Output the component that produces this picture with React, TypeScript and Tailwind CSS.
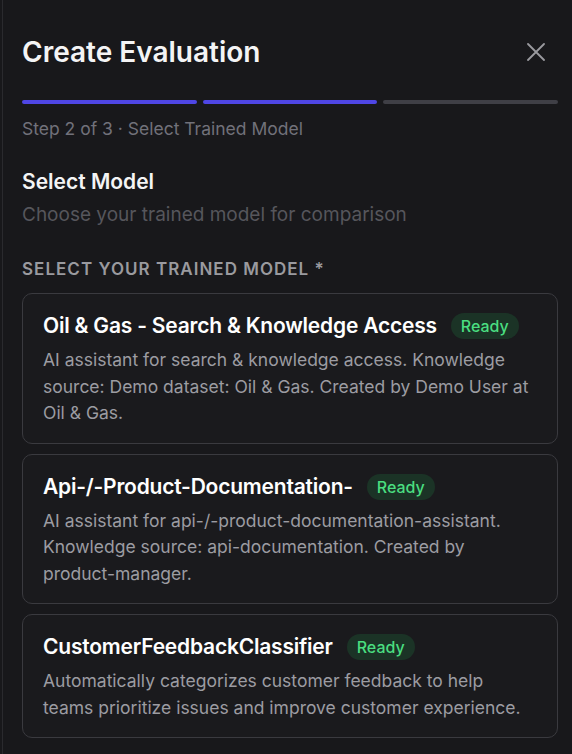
const models = [
  {
    name: "Oil & Gas - Search & Knowledge Access",
    lines: [
      "AI assistant for search & knowledge access. Knowledge",
      "source: Demo dataset: Oil & Gas. Created by Demo User at",
      "Oil & Gas.",
    ],
  },
  {
    name: "Api-/-Product-Documentation-",
    lines: [
      "AI assistant for api-/-product-documentation-assistant.",
      "Knowledge source: api-documentation. Created by",
      "product-manager.",
    ],
  },
  {
    name: "CustomerFeedbackClassifier",
    lines: [
      "Automatically categorizes customer feedback to help",
      "teams prioritize issues and improve customer experience.",
    ],
  },
];

function CloseIcon() {
  return (
    <svg className="block size-[18px]" viewBox="0 0 18 18" fill="none">
      <path d="M1 1L17 17M17 1L1 17" stroke="#9a9a9f" strokeWidth="1.8" strokeLinecap="round" />
    </svg>
  );
}

function ModelCard({ name, lines }: { name: string; lines: string[] }) {
  return (
    <div className="rounded-[10px] border border-[#3a3a3f] bg-[#1a1a1d] px-[20px] pt-[19px] pb-[16px]">
      <div className="flex items-center gap-[14px] h-[26px]">
        <p className="text-[21px] font-semibold leading-[26px] text-white tracking-[-0.01em] whitespace-nowrap">{name}</p>
        <span className="rounded-full bg-[#1b3326] px-[10px] h-[26px] flex items-center text-[16px] leading-[20px] font-medium text-[#4ade80]">
          Ready
        </span>
      </div>
      <p className="mt-[8px] text-[17.5px] leading-[26.5px] text-[#9c9ca2]">
        {lines.map((l) => (
          <span key={l} className="block whitespace-nowrap">
            {l}
          </span>
        ))}
      </p>
    </div>
  );
}

export default function App() {
  return (
    <div className="w-[572px] h-[754px] overflow-hidden bg-[#18181b] pl-[2px] font-['Inter',sans-serif]">
      <div className="h-full border-l border-[#2a2a2e] pl-[19px] pr-[14px] pt-[34px]">
        <div className="flex items-center justify-between h-[36px]">
          <h1 className="text-[28px] font-semibold leading-[36px] text-[#f4f4f5]">Create Evaluation</h1>
          <div className="mr-[13px]">
            <CloseIcon />
          </div>
        </div>
        <div className="mt-[30px] flex gap-[6px]">
          <div className="h-[4px] flex-1 rounded-full bg-[#4f46e5]" />
          <div className="h-[4px] flex-1 rounded-full bg-[#4f46e5]" />
          <div className="h-[4px] flex-1 rounded-full bg-[#3f3f46]" />
        </div>
        <p className="mt-[13px] text-[17.5px] leading-[24px] text-[#71717a]">Step 2 of 3 · Select Trained Model</p>
        <p className="mt-[27px] text-[21px] font-semibold leading-[28px] text-[#f4f4f5]">Select Model</p>
        <p className="mt-[6px] text-[19px] leading-[26px] text-[#56565c]">Choose your trained model for comparison</p>
        <p className="mt-[29px] text-[17px] font-semibold leading-[24px] tracking-[0.06em] text-[#9a9a9f]">
          SELECT YOUR TRAINED MODEL *
        </p>
        <div className="mt-[12px] flex flex-col gap-[10px]">
          {models.map((m) => (
            <ModelCard key={m.name} name={m.name} lines={m.lines} />
          ))}
        </div>
      </div>
    </div>
  );
}
